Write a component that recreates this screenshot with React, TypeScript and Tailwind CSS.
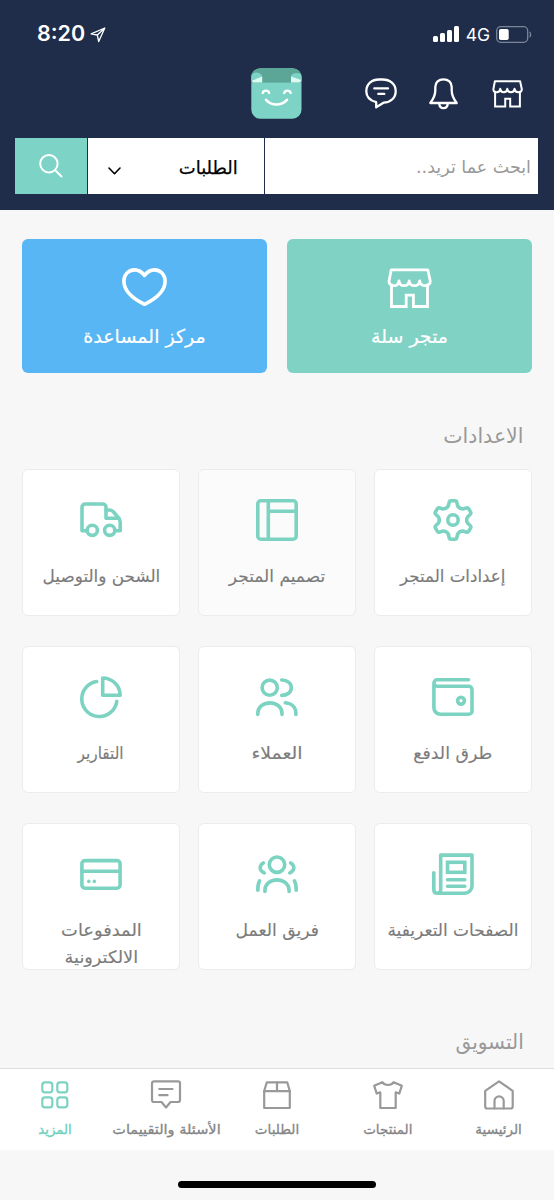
import type { ReactNode } from 'react';

type IconProps = { className?: string; w: number; h: number; sw: number; vb?: string; children: ReactNode };

function Icon({ className = '', w, h, sw, vb, children }: IconProps) {
  return (
    <svg
      width={w}
      height={h}
      viewBox={vb ?? `0 0 ${w} ${h}`}
      fill="none"
      stroke="currentColor"
      strokeWidth={sw}
      strokeLinecap="round"
      strokeLinejoin="round"
      className={`block shrink-0 overflow-visible ${className}`}
    >
      {children}
    </svg>
  );
}

function Storefront({ w, h, sw }: { w: number; h: number; sw: number }) {
  return (
    <Icon w={w} h={h} sw={sw} vb="0 0 45 40">
      <path d="M4.5 17v21.5h14.7V27.2h7.2v11.3h14.1V17" strokeLinejoin="miter" />
      <path d="M4.2 1.8h36.6l2.5 11.5c0 2.6-2.2 4.4-5 4.4-3 0-5.3-1.9-5.6-4.9-.3 3-2.4 4.9-5.2 4.9s-5-1.9-5.3-4.9c-.3 3-2.4 4.9-5.2 4.9s-4.7-1.9-5-4.9c-.3 3-2.3 4.9-5.2 4.9-2.8 0-4.8-1.8-4.8-4.4z" />
    </Icon>
  );
}

/* Six-toothed gear, built from one tooth turned in steps of 60 degrees */
function gearPath() {
  const turn = (x: number, y: number, k: number) => {
    const a = (k * Math.PI) / 3;
    const rx = x * Math.cos(a) - y * Math.sin(a) + 21;
    const ry = x * Math.sin(a) + y * Math.cos(a) + 21;
    return `${rx.toFixed(2)} ${ry.toFixed(2)}`;
  };
  let d = '';
  for (let k = 0; k < 6; k++) {
    d += `${k === 0 ? 'M' : 'L'}${turn(-4.7, -14, k)}`;
    d += `L${turn(-3.9, -17.3, k)}Q${turn(-3.5, -19.2, k)} ${turn(-2, -19.2, k)}`;
    d += `L${turn(2, -19.2, k)}Q${turn(3.5, -19.2, k)} ${turn(3.9, -17.3, k)}`;
    d += `L${turn(4.7, -14, k)}Q${turn(6.4, -11.1, k)} ${turn(-4.7, -14, k + 1)}`;
  }
  return d + 'Z';
}

const gear = (
  <>
    <path d={gearPath()} />
    <circle cx="21" cy="21" r="5.2" />
  </>
);

const layout = (
  <>
    <rect x="1.8" y="1.8" width="38.4" height="38.4" rx="3" />
    <path d="M12.3 2v38M12.3 12.3H40" />
  </>
);

const truck = (
  <>
    <path d="M7 31.7H2V8.2A3.2 3.2 0 0 1 5.2 5H22.800A3.200 3.200 0 0 1 26 8.200V19.200H39" />
    <path d="M26 11h3.2c2 0 3.3.6 4.4 2l5.1 6.2c.9 1.1 1.5 2.5 1.5 4v8.500H35.500" />
    <circle cx="12.3" cy="31.3" r="5.1" />
    <circle cx="29.7" cy="31.3" r="5.1" />
  </>
);

const wallet = (
  <>
    <path d="M36.5 3.8H5.2a3.2 3.2 0 0 0 0 6.5H36.7a3.3 3.3 0 0 1 3.3 3.3V35a3.3 3.3 0 0 1-3.3 3.3H8.500A6.600 6.600 0 0 1 1.900 31.700V7" />
    <circle cx="29" cy="24.7" r="3.4" />
  </>
);

const customers = (
  <>
    <circle cx="13.7" cy="11.7" r="7.6" />
    <path d="M1.8 38.5V37.5c0-6 5-10.6 12.1-10.6S26 31.5 26 37.5v1" />
    <path d="M25.7 4c5.5 0 9.6 3.2 9.6 7.7s-4.1 7.7-9.6 7.7" />
    <path d="M29.3 26.8c6.4.5 10.6 4.7 10.6 10.7v1" />
  </>
);

const reports = (
  <>
    <path d="M16.7 5.5A17.600 17.600 0 1 0 36.800 25.300" />
    <path d="M22.700 2A17.600 17.600 0 0 1 40.200 19.300H22.700z" />
  </>
);

const pages = (
  <>
    <path d="M1.8 19.7V36.5c0 2.3 1.3 3.8 3.4 3.8s3.5-1.5 3.5-3.8V2.1H40V33a7.2 7.2 0 0 1-7.2 7.2H5" />
    <rect x="15.5" y="9.3" width="17.3" height="10" strokeLinejoin="miter" />
    <path d="M15.5 26.7h17.3M15.5 33.3h17.3" />
  </>
);

const team = (
  <>
    <circle cx="21" cy="11.7" r="7.7" />
    <path d="M8.9 38.5V37.5c0-6 5-10.6 12.1-10.6s12.1 4.6 12.1 10.6v1" />
    <path d="M7.3 10c-4.3 2.6-4.3 7.4.9 9.9M3.6 27.8c-1.5 2.6-1.9 5.7-1.8 9.4" />
    <path d="M34.7 10c4.3 2.6 4.3 7.4-.9 9.9M38.400 27.800c1.500 2.600 1.900 5.700 1.800 9.400" />
  </>
);

const payments = (
  <>
    <rect x="1.9" y="7.6" width="38.2" height="27.6" rx="3.2" />
    <path d="M2 18.2h38" />
    <path d="M8.8 28.4h.01M14.3 28.4h.01" />
  </>
);

type Tile = { icon: ReactNode; lines: { text: string; fit: string }[]; tone?: string };

const tiles: Tile[] = [
  { icon: gear, lines: [{ text: 'إعدادات المتجر', fit: 'scale-x-[0.98]' }] },
  { icon: layout, lines: [{ text: 'تصميم المتجر', fit: 'scale-x-100' }], tone: 'bg-[#fbfbfb]' },
  { icon: truck, lines: [{ text: 'الشحن والتوصيل', fit: 'scale-x-[0.99]' }] },
  { icon: wallet, lines: [{ text: 'طرق الدفع', fit: 'scale-x-[1.02]' }] },
  { icon: customers, lines: [{ text: 'العملاء', fit: 'scale-x-[1.11]' }] },
  { icon: reports, lines: [{ text: 'التقارير', fit: 'scale-x-[0.9]' }] },
  { icon: pages, lines: [{ text: 'الصفحات التعريفية', fit: 'scale-x-100' }] },
  { icon: team, lines: [{ text: 'فريق العمل', fit: 'scale-x-[1.01]' }] },
  {
    icon: payments,
    lines: [
      { text: 'المدفوعات', fit: 'scale-x-[1.05]' },
      { text: 'الالكترونية', fit: 'scale-x-[1.04]' },
    ],
  },
];

const tabs = [
  {
    text: 'الرئيسية',
    fit: 'scale-x-100',
    icon: (
      <>
        <path d="M1.2 10.8 15 1.3l13.7 9.5V26.5a2 2 0 0 1-2 2H3.2a2 2 0 0 1-2-2z" />
        <path d="M10.5 28.3V21a4.600 4.600 0 0 1 9.200 0v7.300" />
      </>
    ),
  },
  {
    text: 'المنتجات',
    fit: 'scale-x-100',
    icon: <path d="M9.3 2.2 1.2 5.8l2.5 7.7L7.3 12.3V28H22.7V12.3l3.6 1.2 2.5-7.7-8.1-3.600c-2.500 3.700-8.900 3.700-11.400 0z" />,
  },
  {
    text: 'الطلبات',
    fit: 'scale-x-100',
    icon: (
      <>
        <path d="M2.200 11 4.800 2.300H25.200L27.800 11V28H2.200z" />
        <path d="M2.200 11.200H27.800M15 2.300v8.900" />
      </>
    ),
  },
  {
    text: 'الأسئلة والتقييمات',
    fit: 'scale-x-[1.075]',
    icon: (
      <>
        <path d="M3 1.3H27a2 2 0 0 1 2 2V20a2 2 0 0 1-2 2H19.5L15 27.5 10.5 22H3a2 2 0 0 1-2-2V3.3a2 2 0 0 1 2-2z" />
        <path d="M8.3 9H21.5M8.3 15.2h8.2" />
      </>
    ),
  },
  {
    text: 'المزيد',
    fit: 'scale-x-[0.98]',
    active: true,
    icon: (
      <>
        <rect x="2.3" y="2.3" width="10" height="10" rx="2.6" />
        <rect x="17.3" y="2.3" width="10" height="10" rx="2.6" />
        <rect x="2.3" y="17.3" width="10" height="10" rx="2.6" />
        <rect x="17.3" y="17.3" width="10" height="10" rx="2.6" />
      </>
    ),
  },
];

function StatusBar() {
  return (
    <div dir="ltr" className="flex h-[68px] items-center pr-[22px] pl-[37px] font-['Inter',sans-serif] text-white">
      <span className="text-[21.5px] leading-none font-semibold">8:20</span>
      <Icon w={16} h={16} sw={1.3} className="mt-px ml-[5px]">
        <path d="M14.8 1 1.2 6.900 7.300 8l1.400 6.500zM14.600 1.200 7.300 8" />
      </Icon>
      <span className="grow" />
      <div className="flex h-4 items-end gap-[2.5px]">
        <i className="h-[6px] w-[4.5px] rounded-[1.5px] bg-white" />
        <i className="h-[9px] w-[4.5px] rounded-[1.5px] bg-white" />
        <i className="h-[12px] w-[4.5px] rounded-[1.5px] bg-white" />
        <i className="h-[16px] w-[4.5px] rounded-[1.5px] bg-white" />
      </div>
      <span className="mt-px ml-[7px] text-[17.5px] leading-none">4G</span>
      <Icon w={36} h={17} sw={1.3} className="ml-[6px]">
        <rect x=".7" y=".7" width="31" height="15.6" rx="4" className="text-[#7c8598]" stroke="currentColor" />
        <rect x="3" y="3" width="9.7" height="11" rx="1.8" fill="#fff" stroke="none" />
        <path d="M34 6.300q1.300 2.200 0 4.400" className="text-[#7c8598]" stroke="currentColor" />
      </Icon>
    </div>
  );
}

function Logo() {
  return (
    <svg width="51" height="51" viewBox="0 0 51 51" className="block">
      <clipPath id="bag">
        <rect x=".3" y=".2" width="50.2" height="50.5" rx="9" />
      </clipPath>
      <g clipPath="url(#bag)">
        <rect width="51" height="51" fill="#7dd3c5" />
        <rect width="51" height="14.6" fill="#5ca697" />
        <path d="M0 12.500V8.500C1.500 3.500 8 3 11 7.500V10zM51 12.500V8C50 4.500 43 3.500 40 7.500V9z" fill="#7dd3c5" />
        <path d="M.5 12.8 11.2 8.6v6H2zM50.5 12 40 8.5v6.1h9z" fill="#dbfbf4" />
      </g>
      <g fill="none" stroke="#fff" strokeLinecap="round">
        <path d="M11.700 25c.800-3.200 5.700-3.200 6.500 0M33.200 25c.800-3.200 5.700-3.200 6.500 0" strokeWidth="2.3" />
        <path d="M15 31.800c5.500 6.200 15.500 6.200 21 0" strokeWidth="2.6" />
      </g>
    </svg>
  );
}

export default function App() {
  return (
    <div
      dir="rtl"
      className="flex h-[1200px] w-[554px] flex-col overflow-hidden bg-[#f7f7f7] font-['DejaVu_Sans',sans-serif]"
    >
      <header className="h-[210px] shrink-0 bg-[#1f2d4b]">
        <StatusBar />
        <div className="flex h-[51px] pr-[31px] text-white">
          <div className="pt-[12px]">
            <Storefront w={31} h={27.6} sw={2.9} />
          </div>
          <div className="pt-[10px] pr-[34px]">
            <Icon w={29} h={32} sw={2.3}>
              <path d="M1.300 25c3.200-4.200 5-7.500 5-12.500V9c0-4.500 3.400-7.700 8.200-7.700s8.200 3.200 8.200 7.700v3.500c0 5 1.800 8.300 5 12.500z" />
              <path d="M10.300 25.600c0 2.700 1.700 4.600 4.200 4.600s4.200-1.900 4.200-4.600" />
            </Icon>
          </div>
          <div className="pt-[10px] pr-[32px]">
            <Icon w={32} h={31} sw={2.3}>
              <path d="M11.200 24.200C5 22.500 1.300 18.300 1.300 13.200 1.300 6 6.800 1.500 14 1.500h3.500c7.500 0 13.200 4.500 13.200 11.700 0 6.500-4.800 11.200-12.200 11.500l-7.300 4.600z" />
              <path d="M9.300 10.400H23M13.300 15.900h6" />
            </Icon>
          </div>
          <div className="pr-[63px]">
            <Logo />
          </div>
        </div>
        <div className="mt-[18.5px] flex h-[56px] gap-[1.3px] pr-4 pl-[15px]">
          <div className="grow bg-white pt-[15px] pr-[7px] text-[17.5px] leading-[28px] text-[#999]">ابحث عما تريد..</div>
          <div className="flex w-[175.5px] justify-between bg-white pt-[16px] pr-[26px] pl-[20px] text-[18px] leading-[28px] text-black [-webkit-text-stroke:0.25px]">
            <span>الطلبات</span>
            <Icon w={13} h={8} sw={1.6} className="mt-[13px]">
              <path d="M1 1l5.500 5.700L12 1" />
            </Icon>
          </div>
          <div className="flex w-[72px] items-center justify-center bg-[#7dd3c5] text-white">
            <Icon w={24} h={24} sw={2}>
              <circle cx="9.9" cy="9.700" r="8.700" />
              <path d="M16.200 16.200 22.500 22.500" />
            </Icon>
          </div>
        </div>
      </header>

      <main className="h-[858px] shrink-0 overflow-hidden px-[22px]">
        <div className="mt-[29px] grid grid-cols-2 gap-5">
          <div className="flex h-[133.5px] flex-col items-center rounded-[6px] bg-[#7fd2c4] pt-[29px] text-white">
            <Storefront w={45} h={40} sw={2.8} />
            <span className="mt-[14px] text-[19px] leading-[28px] [-webkit-text-stroke:0.2px]">متجر سلة</span>
          </div>
          <div className="flex h-[133.5px] flex-col items-center rounded-[6px] bg-[#59b6f4] pt-[29px] text-white">
            <Icon w={45} h={40} sw={3.6}>
              <path d="M22.500 7.500C19.500 3.500 16 1.900 12.500 1.900 6.300 1.900 1.900 6.800 1.900 13c0 9.500 9 17.700 20.600 23.300C34.100 30.700 43.100 22.500 43.100 13c0-6.200-4.400-11.100-10.600-11.100-3.500 0-7 1.600-10 5.600z" />
            </Icon>
            <span className="mt-[14px] text-[19px] leading-[28px] [-webkit-text-stroke:0.2px]">مركز المساعدة</span>
          </div>
        </div>

        <h2 className="mt-[49.5px] pr-[8.5px] text-[20.5px] leading-[28px] text-[#999]">الاعدادات</h2>

        <div className="mt-[18.8px] grid grid-cols-3 gap-x-[18px] gap-y-[30.2px]">
          {tiles.map((tile, i) => (
            <div
              key={i}
              className={`flex h-[147px] flex-col items-center overflow-hidden rounded-[6px] border border-[#ececec] pt-[29px] ${tile.tone ?? 'bg-white'}`}
            >
              <Icon w={42} h={42} sw={3.6} className="text-[#7dd3c2]">
                {tile.icon}
              </Icon>
              <div className="mt-[22px] flex flex-col items-center text-[17px] leading-[26.5px] text-[#7b7b7b] [-webkit-text-stroke:0.15px]">
                {tile.lines.map((l) => (
                  <span key={l.text} className={`whitespace-nowrap ${l.fit}`}>
                    {l.text}
                  </span>
                ))}
              </div>
            </div>
          ))}
        </div>

        <h2 className="mt-[58px] pr-[8.5px] text-[20.5px] leading-[28px] text-[#999]">
          <span className="inline-block origin-right scale-x-[0.98]">التسويق</span>
        </h2>
      </main>

      <nav className="grid h-[82px] shrink-0 grid-cols-5 border-t border-[#dedede] bg-white">
        {tabs.map((t) => (
          <div key={t.text} className={`flex flex-col items-center pt-[11px] ${t.active ? 'text-[#7dd3c2]' : 'text-[#999]'}`}>
            <Icon w={30} h={30} sw={2.2}>
              {t.icon}
            </Icon>
            <span
              className={`mt-[7px] text-[13.5px] leading-[24px] whitespace-nowrap [-webkit-text-stroke:0.3px] ${t.fit} ${t.active ? 'text-[#6ccfbb]' : 'text-[#858585]'}`}
            >
              {t.text}
            </span>
          </div>
        ))}
      </nav>
      <div className="flex grow justify-center pt-[31px]">
        <div className="h-[7px] w-[198px] rounded-full bg-black" />
      </div>
    </div>
  );
}
